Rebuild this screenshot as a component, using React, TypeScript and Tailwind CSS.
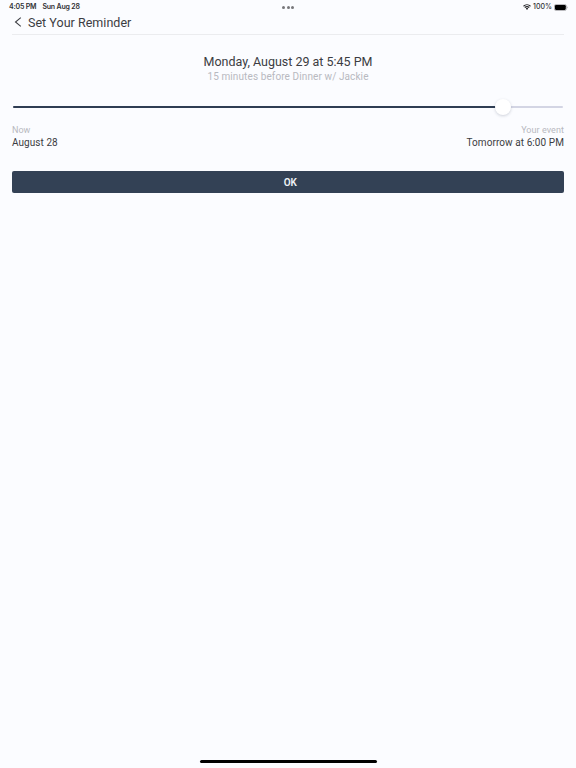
import React, { useState } from 'react'

interface Reminder {
  date: string
  offset: string
  start: string
  end: string
}

const reminder: Reminder = {
  date: 'Monday, August 29 at 5:45 PM',
  offset: '15 minutes before Dinner w/ Jackie',
  start: 'August 28',
  end: 'Tomorrow at 6:00 PM'
}

function StatusBar() {
  return (
    <div className="grid h-[14px] grid-cols-3 items-center pl-[9px] pr-[8px] font-['Inter',sans-serif] text-[7px] leading-[14px] font-semibold text-[#303033]">
      <div className="flex gap-[6px] whitespace-nowrap">
        <span className="tracking-[-0.18px]">4:05 PM</span>
        <span className="tracking-[-0.18px]">Sun Aug 28</span>
      </div>
      <div className="flex justify-center gap-[1.5px]">
        <span className="size-[3px] rounded-full bg-[#77777a]" />
        <span className="size-[3px] rounded-full bg-[#77777a]" />
        <span className="size-[3px] rounded-full bg-[#77777a]" />
      </div>
      <div className="flex items-center justify-end">
        <svg className="mr-[2px] h-[6px] w-[8px]" viewBox="0 0 16 12" fill="none" stroke="#252528" strokeWidth="2.2">
          <path d="M1 4.5c4-4 10-4 14 0M3.6 7.2c2.5-2.5 6.3-2.5 8.8 0" />
          <path d="M5.6 9.2c1.4-1.3 3.4-1.3 4.8 0L8 11.8z" fill="#252528" stroke="none" />
        </svg>
        <span className="mr-[2px] font-medium">100%</span>
        <svg className="h-[7px] w-[14px]" viewBox="0 0 14 7">
          <rect x="0.25" y="0.5" width="12.2" height="6" rx="1.7" fill="none" stroke="#77777a" strokeWidth="0.5" />
          <rect x="0.9" y="1.1" width="10.9" height="4.8" rx="1.1" fill="#000" />
          <path d="M13 2.6v1.8c.7-.2.7-1.6 0-1.8z" fill="#88888b" />
        </svg>
      </div>
    </div>
  )
}

export default function App() {
  // Slider position in percent of the time left until the event
  const [position] = useState(89)

  return (
    <div className="flex h-screen flex-col overflow-hidden bg-[#fbfcff] font-['Roboto',sans-serif] text-[#3b3c42]">
      <StatusBar />

      {/* Header */}
      <header className="mx-3 flex h-[21px] items-start border-b border-[#ebecef]">
        <button className="mr-[6px] ml-[2px] mt-[3px]" aria-label="Back">
          <svg className="h-[10px] w-[8px]" viewBox="0 0 8 10" fill="none" stroke="#3f4046" strokeWidth="1.1">
            <path d="M6.8.6 1.5 5l5.3 4.4" />
          </svg>
        </button>
        <h1 className="text-[12.5px] leading-[17px] tracking-[0.03px]">Set Your Reminder</h1>
      </header>

      {/* Selected time */}
      <div className="flex flex-col items-center pt-[19px] whitespace-nowrap">
        <h2 className="text-[12.5px] leading-4 tracking-[-0.01px]">{reminder.date}</h2>
        <p className="text-[10px] leading-[13px] tracking-[0.1px] text-[#b8b9c0]">{reminder.offset}</p>
      </div>

      {/* Slider */}
      <div className="relative mx-[13px] mt-[20px] flex h-2 items-center">
        <div className="h-[2px] w-full overflow-hidden rounded-full bg-[#d3d5e4]">
          <div className="h-full bg-[#2f3d53]" style={{ width: `${position}%` }} />
        </div>
        <span
          className="absolute size-4 -translate-x-1/2 rounded-full bg-white shadow-[0_1px_3px_rgba(50,60,85,0.22)]"
          style={{ left: `${position}%` }}
        />
      </div>

      {/* Range labels */}
      <div className="mx-3 mt-[13px] flex justify-between">
        <div>
          <p className="text-[9px] leading-[12px] text-[#b8b9c0]">Now</p>
          <p className="text-[10px] leading-[14px] tracking-[0.06px]">{reminder.start}</p>
        </div>
        <div className="text-right">
          <p className="text-[9px] leading-[12px] tracking-[0.06px] text-[#b8b9c0]">Your event</p>
          <p className="text-[10px] leading-[14px] tracking-[0.08px]">{reminder.end}</p>
        </div>
      </div>

      <button className="mr-[12px] ml-[11.5px] mt-[20.5px] h-[22px] rounded-[2px] bg-[#334155] pl-[5px] text-[10px] leading-[23px] font-semibold text-[#eef1f6]">
        OK
      </button>

      {/* Home indicator */}
      <div className="mt-auto mb-[5px] h-[3px] w-[177px] self-center rounded-full bg-black" />
    </div>
  )
}
